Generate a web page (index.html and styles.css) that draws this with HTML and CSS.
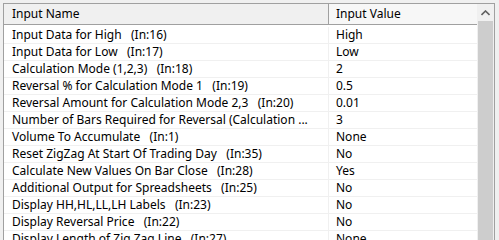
FILE: index.html
```html
<!DOCTYPE html>
<html lang="en">
<head>
    <meta charset="UTF-8">
    <title>Inputs</title>
    <link rel="stylesheet" href="styles.css">
</head>
<body>
    <div class="frame">
        <div class="grid">
            <div class="head">
                <div class="cell name">Input Name</div>
                <div class="cell value">Input Value</div>
            </div>
            <div class="row first"><div class="cell name">Input Data for High   (In:16)</div><div class="cell value">High</div></div>
            <div class="row"><div class="cell name">Input Data for Low   (In:17)</div><div class="cell value">Low</div></div>
            <div class="row"><div class="cell name">Calculation Mode (1,2,3)   (In:18)</div><div class="cell value">2</div></div>
            <div class="row"><div class="cell name">Reversal % for Calculation Mode 1   (In:19)</div><div class="cell value">0.5</div></div>
            <div class="row"><div class="cell name">Reversal Amount for Calculation Mode 2,3   (In:20)</div><div class="cell value">0.01</div></div>
            <div class="row"><div class="cell name">Number of Bars Required for Reversal (Calculation ...</div><div class="cell value">3</div></div>
            <div class="row"><div class="cell name">Volume To Accumulate   (In:1)</div><div class="cell value">None</div></div>
            <div class="row"><div class="cell name">Reset ZigZag At Start Of Trading Day   (In:35)</div><div class="cell value">No</div></div>
            <div class="row"><div class="cell name">Calculate New Values On Bar Close   (In:28)</div><div class="cell value">Yes</div></div>
            <div class="row"><div class="cell name">Additional Output for Spreadsheets   (In:25)</div><div class="cell value">No</div></div>
            <div class="row"><div class="cell name">Display HH,HL,LL,LH Labels   (In:23)</div><div class="cell value">No</div></div>
            <div class="row"><div class="cell name">Display Reversal Price   (In:22)</div><div class="cell value">No</div></div>
            <div class="row"><div class="cell name">Display Length of Zig Zag Line   (In:27)</div><div class="cell value">None</div></div>
        </div>
        <div class="scrollbar">
            <div class="arrow">
                <svg width="9" height="6" viewBox="0 0 9 6"><path d="M0.5 5 L4.5 1 L8.5 5" fill="none" stroke="#606060" stroke-width="1.6"/></svg>
            </div>
            <div class="thumb"></div>
        </div>
    </div>
</body>
</html>
```

FILE: styles.css
```css
*{
    box-sizing: border-box;
}
body{
    margin: 0;
    background: #f0f0f0;
    font-family: 'Noto Sans', 'Open Sans', sans-serif;
    font-size: 12px;
    color: #000;
    height: 240px;
    overflow: hidden;
}
.frame{
    margin: 3px 0 0 3px;
    width: 492px;
    height: 260px;
    border-top: 1px solid #a0a0a0;
    border-left: 1px solid #a0a0a0;
    border-right: 1px solid #a0a0a0;
    background: #fff;
    display: flex;
}
.grid{
    flex: 1;
    min-width: 0;
}
.head{
    display: flex;
    height: 21px;
    border-bottom: 1px solid #a0a0a0;
}
.head .name{
    background: #f0f0f0;
    border-right: 1px solid #a0a0a0;
}
.head .value{
    background: #f7f7f7;
}
.cell{
    white-space: pre;
    overflow: hidden;
    line-height: 16px;
}
.head .cell{
    line-height: 20px;
}
.name{
    width: 325px;
    padding-left: 8px;
    padding-right: 4px;
}
.value{
    flex: 1;
    padding-left: 7px;
}
.row{
    display: flex;
    height: 17px;
    border-bottom: 1px solid #f0f0f0;
}
.row.first{
    height: 19px;
    padding-top: 2px;
}
.row .name{
    border-right: 1px solid #f0f0f0;
}
.scrollbar{
    width: 17px;
    background: #f0f0f0;
    display: flex;
    flex-direction: column;
    align-items: center;
}
.arrow{
    height: 17px;
    width: 100%;
    display: flex;
    align-items: center;
    justify-content: center;
}
.thumb{
    width: 15px;
    flex: 1;
    background: #cdcdcd;
    margin-left: -1px;
}
```
